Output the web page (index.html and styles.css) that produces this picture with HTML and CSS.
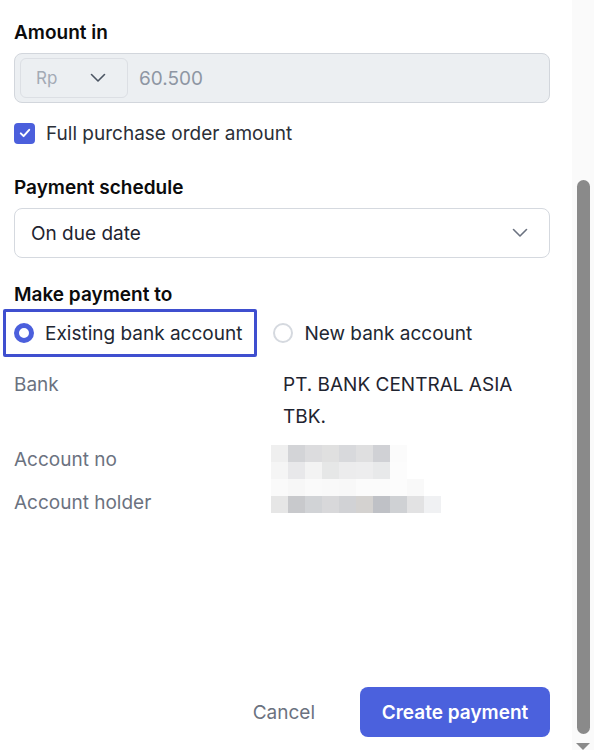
FILE: index.html
```html
<!DOCTYPE html>
<html lang="en">
<head>
<meta charset="utf-8">
<title>Create payment</title>
<link rel="stylesheet" href="styles.css">
</head>
<body>
<div class="frame">
  <main class="panel">
    <section class="field">
      <div class="label">Amount in</div>
      <div class="amount-input">
        <div class="currency">
          <span>Rp</span>
          <svg class="chev" viewBox="0 0 16 10" width="16" height="10"><path d="M1.5 1.5 8 8l6.5-6.5" fill="none" stroke="#4b5563" stroke-width="1.6" stroke-linecap="round" stroke-linejoin="round"/></svg>
        </div>
        <span class="amount-value">60.500</span>
      </div>
    </section>

    <label class="check-row">
      <span class="checkbox">
        <svg viewBox="0 0 20 20" width="14" height="14"><path d="M4 10.5l4 4 8-9" fill="none" stroke="#fff" stroke-width="2.8" stroke-linecap="round" stroke-linejoin="round"/></svg>
      </span>
      <span>Full purchase order amount</span>
    </label>

    <section class="field schedule">
      <div class="label">Payment schedule</div>
      <div class="select">
        <span>On due date</span>
        <svg class="chev" viewBox="0 0 16 10" width="16" height="10"><path d="M1.5 1.5 8 8l6.5-6.5" fill="none" stroke="#6b7280" stroke-width="1.6" stroke-linecap="round" stroke-linejoin="round"/></svg>
      </div>
    </section>

    <section class="field payto">
      <div class="label">Make payment to</div>
      <div class="radios">
        <div class="radio-opt focused">
          <span class="radio on"></span>
          <span>Existing bank account</span>
        </div>
        <div class="radio-opt">
          <span class="radio"></span>
          <span>New bank account</span>
        </div>
      </div>
    </section>

    <dl class="details">
      <dt>Bank</dt>
      <dd>PT. BANK CENTRAL ASIA<br>TBK.</dd>
      <dt>Account no</dt>
      <dd><div class="blur blur-no"><div class="r1"></div><div class="r2"></div></div></dd>
      <dt>Account holder</dt>
      <dd><div class="blur blur-holder"><div class="r3"></div><div class="r4"></div></div></dd>
    </dl>

    <footer class="actions">
      <button class="btn-cancel" type="button">Cancel</button>
      <button class="btn-primary" type="button">Create payment</button>
    </footer>
  </main>
  <aside class="scrollbar">
    <div class="thumb"></div>
    <div class="arrow"></div>
  </aside>
</div>
</body>
</html>
```
FILE: styles.css
```css
* { box-sizing: border-box; }
html, body { margin: 0; padding: 0; }
body {
  font-family: Inter, "Noto Sans", "Liberation Sans", sans-serif;
  color: #1f2937;
  background: #fff;
  width: 594px;
  height: 750px;
  overflow: hidden;
}
.frame {
  display: flex;
  height: 750px;
}
.panel {
  width: 572px;
  padding: 20px 22px 13px 14px;
  display: flex;
  flex-direction: column;
}
.label {
  font-size: 19px;
  font-weight: 600;
  line-height: 24px;
  padding-top: 1px;
  color: #0b0b0c;
  margin-bottom: 8px;
}
.amount-input {
  height: 50px;
  background: #eceff2;
  border: 1px solid #d2d6dc;
  border-radius: 8px;
  display: flex;
  align-items: center;
  padding: 5px;
}
.currency {
  width: 108px;
  height: 40px;
  border: 1px solid #dcdfe4;
  border-radius: 6px;
  display: flex;
  align-items: center;
  justify-content: space-between;
  padding: 0 21px 0 15px;
  font-size: 17px;
  color: #a3aab5;
}
.amount-value {
  margin-left: 11px;
  font-size: 19px;
  color: #8e96a3;
}
.check-row {
  display: flex;
  align-items: center;
  margin-top: 18px;
  height: 24px;
  font-size: 19px;
  color: #2b2f37;
}
.checkbox {
  width: 21px;
  height: 21px;
  border-radius: 4px;
  background: #4b5fdc;
  display: flex;
  align-items: center;
  justify-content: center;
  margin-right: 11px;
}
.schedule { margin-top: 30px; }
.select {
  height: 50px;
  border: 1px solid #d5d9df;
  border-radius: 8px;
  display: flex;
  align-items: center;
  justify-content: space-between;
  padding: 0 21px 0 16px;
  font-size: 19px;
  color: #1f2430;
}
.payto { margin-top: 24px; }
.payto .label { margin-bottom: 2px; }
.radios {
  display: flex;
  align-items: center;
  margin-left: -11px;
}
.radio-opt {
  display: flex;
  align-items: center;
  height: 48px;
  padding: 0 10px 0 11px;
  font-size: 19px;
  color: #222732;
  border: 3px solid transparent;
}
.radio-opt.focused {
  border-color: #3f4fcf;
  border-radius: 2px;
  padding: 0 12px 0 8px;
  margin-right: 2px;
}
.radio {
  width: 20px;
  height: 20px;
  border-radius: 50%;
  border: 2px solid #d5d9df;
  margin-right: 11px;
  background: #fff;
}
.radio.on { border: 5px solid #4b5fdc; }
.details {
  margin: 12px 0 0;
  display: grid;
  grid-template-columns: 269px 1fr;
  row-gap: 11px;
  font-size: 19px;
  line-height: 32px;
}
.details dt { color: #6b7280; }
.details dd { margin: 0; color: #1f2430; }
.blur { width: 170px; }
.blur div { height: 17px; }
.blur-no { margin: 1px 0 -3px -12px; }
.blur-holder { margin: -8px 0 0 -12px; }
.r1 { background: linear-gradient(to right, #efefef 0 17px, #d3d4d7 17px 34px, #dcdcde 34px 51px, #e0e0e0 51px 68px, #d8d9dc 68px 85px, #dfdfe0 85px 102px, #d0d1d5 102px 119px, #fbfbfb 119px 136px, #fff 136px); }
.r2 { background: linear-gradient(to right, #f5f5f5 0 17px, #e8e8ea 17px 34px, #f3f3f3 34px 51px, #e6e7e7 51px 68px, #ececed 68px 85px, #ededee 85px 102px, #e8e9ea 102px 119px, #fcfcfc 119px 136px, #fff 136px); }
.r3 { background: linear-gradient(to right, #fafafa 0 17px, #f7f7f7 17px 34px, #fafafa 34px 51px, #f9f9f9 51px 68px, #f8f8f8 68px 85px, #fbfbfb 85px 102px, #fbfbfb 102px 119px, #fcfcfc 119px 136px, #f9f9f9 136px 153px, #fff 153px); }
.r4 { background: linear-gradient(to right, #e6e6e6 0 17px, #c8c9cc 17px 34px, #d1d3d6 34px 51px, #d8d8da 51px 68px, #d1d2d5 68px 85px, #d4d2d0 85px 102px, #bfc1c6 102px 119px, #cfd1d4 119px 136px, #e2e2e3 136px 153px, #f0f1f3 153px 170px); }
.actions {
  margin-top: auto;
  display: flex;
  justify-content: flex-end;
  align-items: center;
  gap: 19px;
}
button {
  font-family: inherit;
  font-size: 19px;
  border: none;
  cursor: pointer;
}
.btn-cancel {
  background: transparent;
  color: #6b7280;
  padding: 0 26px;
  height: 50px;
}
.btn-primary {
  background: #4b61dd;
  color: #fff;
  font-weight: 600;
  height: 50px;
  width: 190px;
  border-radius: 8px;
}
.scrollbar {
  width: 22px;
  background: #fafafa;
  position: relative;
  display: flex;
  flex-direction: column;
  align-items: center;
  padding-top: 180px;
}
.thumb {
  width: 13px;
  height: 554px;
  background: #8a8a8a;
  border-radius: 7px;
}
.arrow {
  margin-top: 9px;
  width: 0;
  height: 0;
  border-left: 7px solid transparent;
  border-right: 7px solid transparent;
  border-top: 7px solid #8a8a8a;
}
```
